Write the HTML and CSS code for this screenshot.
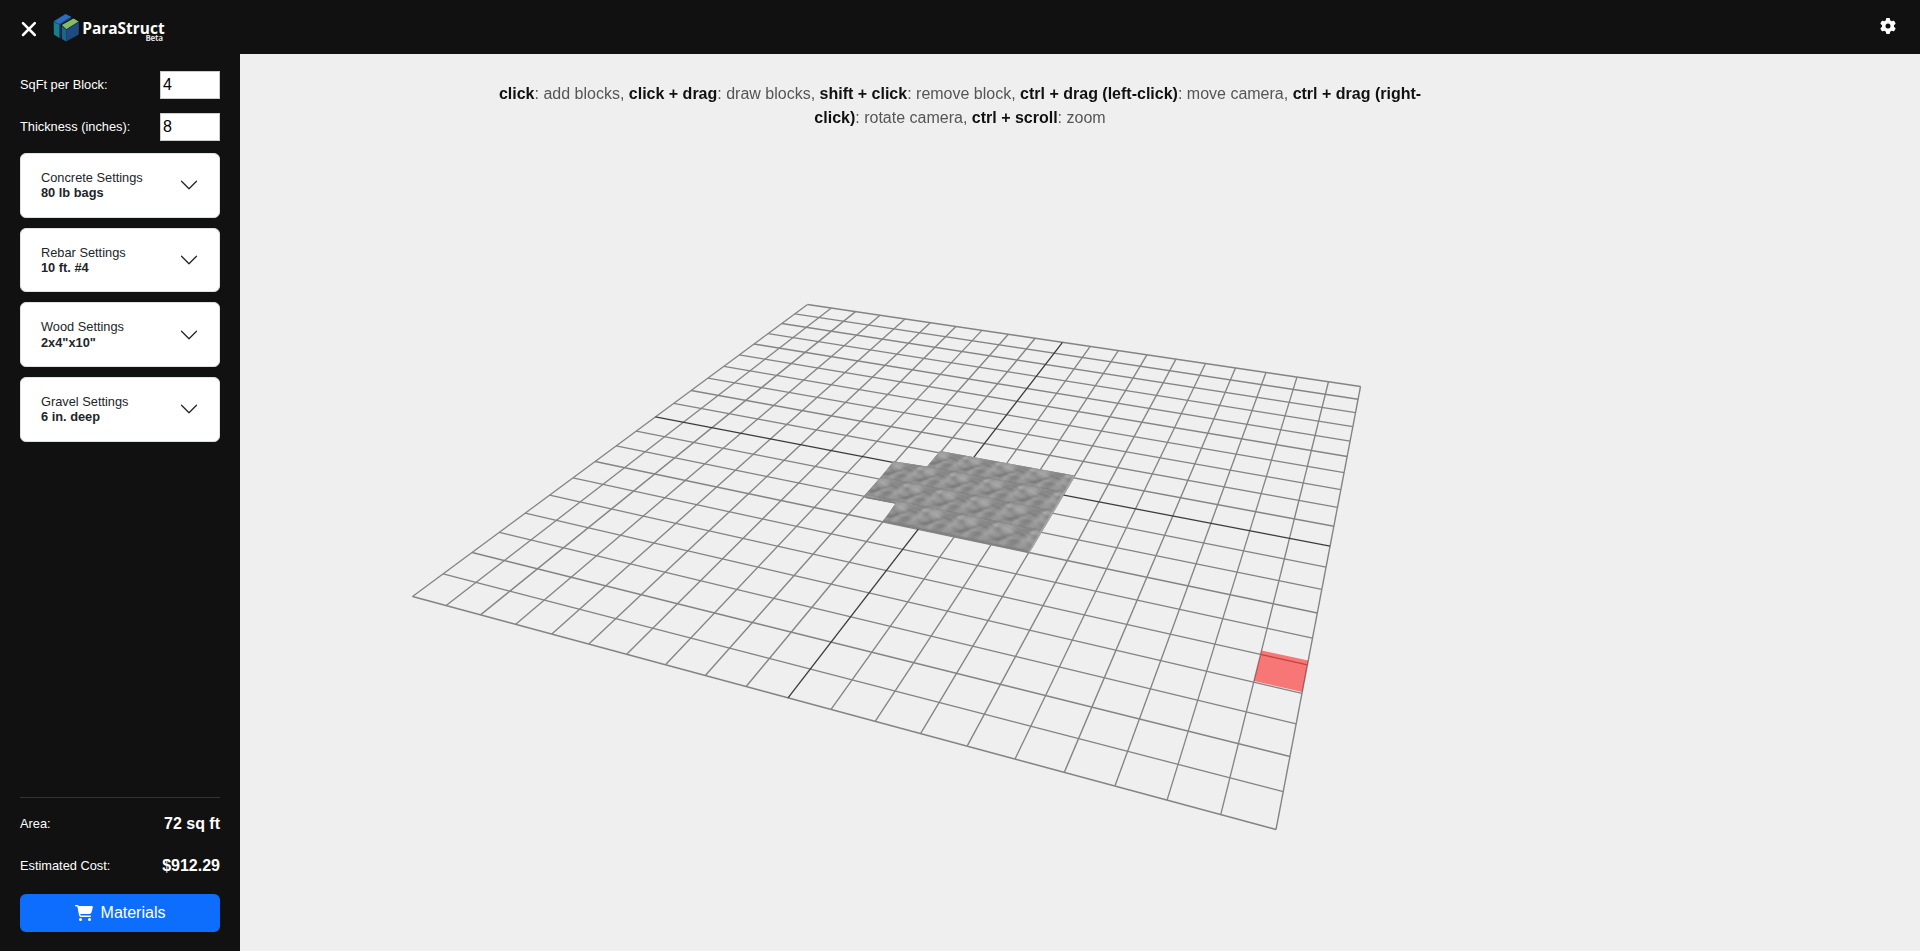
FILE: index.html
```html
<!DOCTYPE html>
<html lang="en">
<head>
<meta charset="utf-8">
<title>ParaStruct</title>
<link rel="stylesheet" href="styles.css">
</head>
<body>
<header class="topbar">
  <div class="brand">
    <svg class="close" viewBox="0 0 18 18"><path d="M3 3.2 14.8 15M14.8 3.2 3 15"/></svg>
    <svg class="logo" viewBox="0 0 92 30">
      <path fill="#2b6cc4" d="M.7 8.200 12.500.900 18.200 3.700 6.200 11.200z"/>
      <path fill="#15808a" d="M.700 8.700 6.200 11.600 6.300 24.900.900 21.500z"/>
      <path fill="#1d4f92" d="M6.200 11.200 18.200 3.700 18.300 6 9.500 11.700 8.500 25.700 6.300 24.800z"/>
      <path fill="#111" d="M7.500 11.400 19.200 4.500 19.500 5.800 8.800 12.500 8.700 25.900 7.500 25.200z"/>
      <path fill="#84bd66" d="M8.900 11.900 20.500 5.400 25.700 8.400 13.300 16.200z"/>
      <path fill="#1b6585" d="M8.800 13 13.200 16.700V28.500L8.900 25.900z"/>
      <path fill="#1d4a80" d="M13.200 16.700 25.800 9V21.600L13.200 28.500z"/>
      <text class="logo-name" x="29.200" y="21" textLength="82.500" lengthAdjust="spacingAndGlyphs">ParaStruct</text>
      <text class="logo-tag" x="92.500" y="27.500" textLength="17.500">Beta</text>
    </svg>
  </div>
  <svg class="gear" viewBox="0 0 512 512"><path d="M495.900 166.600c3.200 8.700 .5 18.400-6.400 24.600l-43.300 39.400c1.100 8.300 1.700 16.800 1.700 25.400s-.6 17.100-1.700 25.400l43.300 39.400c6.900 6.200 9.600 15.900 6.400 24.600c-4.400 11.900-9.700 23.300-15.800 34.300l-4.700 8.100c-6.600 11-14 21.400-22.100 31.200c-5.900 7.200-15.700 9.600-24.500 6.800l-55.700-17.700c-13.400 10.300-28.200 18.900-44 25.400l-12.500 57.100c-2 9.100-9 16.300-18.200 17.800c-13.800 2.300-28 3.500-42.500 3.500s-28.700-1.200-42.500-3.500c-9.200-1.500-16.200-8.700-18.200-17.800l-12.500-57.100c-15.800-6.500-30.600-15.100-44-25.400L83.100 425.900c-8.800 2.800-18.600 .3-24.500-6.800c-8.100-9.800-15.500-20.200-22.100-31.200l-4.700-8.100c-6.100-11-11.400-22.400-15.800-34.300c-3.200-8.700-.5-18.400 6.400-24.600l43.300-39.400C64.600 273.100 64 264.600 64 256s.6-17.100 1.700-25.400L22.400 191.200c-6.900-6.200-9.600-15.900-6.400-24.600c4.400-11.900 9.700-23.300 15.800-34.300l4.700-8.100c6.600-11 14-21.400 22.100-31.200c5.900-7.200 15.700-9.600 24.500-6.800l55.700 17.700c13.400-10.300 28.200-18.900 44-25.400l12.500-57.100c2-9.100 9-16.300 18.200-17.800C227.300 1.200 241.500 0 256 0s28.700 1.200 42.500 3.500c9.200 1.500 16.200 8.700 18.200 17.800l12.500 57.100c15.800 6.500 30.600 15.100 44 25.400l55.700-17.700c8.800-2.800 18.600-.3 24.500 6.800c8.100 9.800 15.500 20.200 22.100 31.200l4.700 8.100c6.100 11 11.400 22.400 15.800 34.300zM256 336a80 80 0 1 0 0-160 80 80 0 1 0 0 160z"/></svg>
</header>
<div class="workspace">
  <aside class="sidebar">
    <label class="field">SqFt per Block:<input class="number" value="4"></label>
    <label class="field">Thickness (inches):<input class="number" value="8"></label>
    <div class="cards">
      <button class="card"><span>Concrete Settings<b>80 lb bags</b></span><svg class="chevron" viewBox="0 0 16 16"><path d="M2 5l6 6 6-6"/></svg></button>
      <button class="card"><span>Rebar Settings<b>10 ft. #4</b></span><svg class="chevron" viewBox="0 0 16 16"><path d="M2 5l6 6 6-6"/></svg></button>
      <button class="card"><span>Wood Settings<b>2x4"x10"</b></span><svg class="chevron" viewBox="0 0 16 16"><path d="M2 5l6 6 6-6"/></svg></button>
      <button class="card"><span>Gravel Settings<b>6 in. deep</b></span><svg class="chevron" viewBox="0 0 16 16"><path d="M2 5l6 6 6-6"/></svg></button>
    </div>
    <div class="summary">
      <div class="total">Area:<b>72 sq ft</b></div>
      <div class="total">Estimated Cost:<b>$912.29</b></div>
      <button class="materials"><svg class="cart" viewBox="0 0 576 512"><path d="M0 24C0 10.700 10.700 0 24 0H69.500c22 0 41.500 12.800 50.600 32h411c26.300 0 45.500 25 38.600 50.400l-41 152.300c-8.500 31.400-37 53.300-69.500 53.300H170.700l5.400 28.500c2.200 11.300 12.100 19.500 23.600 19.500H488c13.300 0 24 10.700 24 24s-10.700 24-24 24H199.700c-34.600 0-64.300-24.600-70.700-58.500L77.400 54.500c-.7-3.800-4-6.500-7.900-6.500H24C10.700 48 0 37.300 0 24zM128 464a48 48 0 1 1 96 0 48 48 0 1 1 -96 0zm336-48a48 48 0 1 1 0 96 48 48 0 1 1 0-96z"/></svg>Materials</button>
    </div>
  </aside>
  <main class="stage">
    <canvas class="scene" id="scene" width="1680" height="897"></canvas>
    <p class="help"><b>click</b>: add blocks, <b>click + drag</b>: draw blocks, <b>shift + click</b>: remove block, <b>ctrl + drag (left-click)</b>: move camera, <b>ctrl + drag (right-click)</b>: rotate camera, <b>ctrl + scroll</b>: zoom</p>
  </main>
</div>
<script src="scene.js"></script>
</body>
</html>
```
FILE: styles.css
```css
* { box-sizing: border-box; }
body {
  margin: 0;
  height: 100vh;
  display: flex;
  flex-direction: column;
  overflow: hidden;
  background: #111;
  color: #fff;
  font: 16px/1.5 "Liberation Sans", Arial, sans-serif;
}
button, input { font: inherit; }
.topbar {
  height: 54px;
  flex: none;
  display: flex;
  justify-content: space-between;
  padding: 0 24px 0 20px;
}
.brand { display: flex; align-items: flex-start; }
.close { width: 18px; height: 18px; margin: 20px 15px 0 0; fill: none; stroke: #fff; stroke-width: 2.5; stroke-linecap: round; }
.logo { width: 92px; height: 30px; margin-top: 13px; overflow: visible; }
.logo-name { font: 700 15.5px "Open Sans", "Noto Sans", sans-serif; fill: #fff; }
.logo-tag { font: 700 8px "Open Sans", "Noto Sans", sans-serif; fill: #ddd; }
.gear { width: 16px; height: 16px; margin-top: 18px; fill: #fff; }
.workspace { flex: 1; display: flex; min-height: 0; }
.sidebar {
  width: 240px;
  flex: none;
  display: flex;
  flex-direction: column;
  padding: 17px 20px 19px;
  font-size: 12.8px;
}
.field { height: 28px; margin-bottom: 14px; display: flex; align-items: center; justify-content: space-between; white-space: nowrap; }
.number { width: 60px; height: 28px; padding: 0 2px; border: 1px solid #ccc; border-radius: 0; background: #fff; color: #000; font-size: 16px; line-height: 24px; }
.cards { display: flex; flex-direction: column; gap: 10px; margin-top: -2px; }
.card {
  display: flex;
  align-items: center;
  justify-content: space-between;
  padding: 16px 20px;
  border: 1px solid #dee2e6;
  border-radius: 6px;
  background: #fff;
  color: #212529;
  line-height: 1.2;
  text-align: left;
}
.card b { display: block; }
.chevron { width: 20px; height: 20px; fill: none; stroke: #212529; stroke-linecap: round; stroke-linejoin: round; }
.summary { margin-top: auto; border-top: 1px solid #333; padding-top: 5px; }
.total { height: 42px; display: flex; align-items: center; justify-content: space-between; }
.total b { font-size: 16px; }
.materials { width: 100%; height: 38px; margin-top: 7px; padding: 0; display: flex; align-items: center; justify-content: center; gap: 8px; border: 0; border-radius: 6px; background: #0d6efd; color: #fff; font-size: 16px; }
.cart { width: 18px; height: 16px; fill: #fff; }
.stage { position: relative; flex: 1; background: #efefef; }
.scene { display: block; }
.help { position: absolute; top: 28px; left: 240px; width: 960px; margin: 0; text-align: center; color: #555; }
.help b { color: #111; }
```
FILE: scene.js
```js
const ctx = document.getElementById('scene').getContext('2d');
ctx.translate(-240, -54);

// Projects a unit square onto a quad given as TL, TR, BR, BL.
function projection(q) {
  const [[x0, y0], [x1, y1], [x2, y2], [x3, y3]] = q;
  const dx1 = x1 - x2, dx2 = x3 - x2, sx = x0 - x1 + x2 - x3;
  const dy1 = y1 - y2, dy2 = y3 - y2, sy = y0 - y1 + y2 - y3;
  const d = dx1 * dy2 - dx2 * dy1;
  const g = (sx * dy2 - dx2 * sy) / d, h = (dx1 * sy - sx * dy1) / d;
  const a = x1 - x0 + g * x1, b = x3 - x0 + h * x3;
  const c = y1 - y0 + g * y1, e = y3 - y0 + h * y3;
  return {
    at(u, v) { const w = g * u + h * v + 1; return [(a * u + b * v + x0) / w, (c * u + e * v + y0) / w]; },
    inverse(x, y) {
      const A = a - g * x, B = b - h * x, C = c - g * y, D = e - h * y;
      const k = A * D - B * C, p = x - x0, r = y - y0;
      return [(p * D - B * r) / k, (A * r - p * C) / k];
    }
  };
}

function path(points) {
  ctx.beginPath();
  points.forEach(p => ctx.lineTo(p[0], p[1]));
}

const grid = projection([[807.5, 304.5], [1360.5, 386.5], [1276, 829.5], [412.5, 596.5]]);
function gridLine(p, q, color) {
  ctx.strokeStyle = color;
  path([grid.at(...p), grid.at(...q)]);
  ctx.stroke();
}
ctx.lineWidth = 1.35;
for (let i = 0; i <= 20; i++) {
  if (i === 10) continue;
  gridLine([i / 20, 0], [i / 20, 1], '#848484');
  gridLine([0, i / 20], [1, i / 20], '#848484');
}
gridLine([0.5, 0], [0.5, 1], '#3c3c3c');
gridLine([0, 0.5], [1, 0.5], '#3c3c3c');

// Concrete texture, repeating once per block.
function hash(x, y, n) {
  x = ((x % n) + n) % n; y = ((y % n) + n) % n;
  const s = Math.sin(x * 127.1 + y * 311.7 + n * 17.3) * 43758.5453;
  return s - Math.floor(s);
}
function noise(x, y, n) {
  x *= n; y *= n;
  const i = Math.floor(x), j = Math.floor(y);
  let s = x - i, t = y - j;
  s = s * s * (3 - 2 * s); t = t * t * (3 - 2 * t);
  return (hash(i, j, n) * (1 - s) + hash(i + 1, j, n) * s) * (1 - t) +
         (hash(i, j + 1, n) * (1 - s) + hash(i + 1, j + 1, n) * s) * t - 0.5;
}

const slab = projection([[940, 451], [1074.5, 475], [1029, 552], [883.5, 520.5]]);
const outline = [[940, 451], [1074.5, 475.5], [1029, 552.7], [883, 521.5], [895.5, 503.5], [864.5, 497.5], [893.5, 461.3], [927, 466.5]];
ctx.save();
path(outline);
ctx.closePath();
ctx.fillStyle = '#8e8e8e';
ctx.fill();
ctx.clip();
for (let y = 450; y < 554; y++) {
  for (let x = 864; x < 1076; x++) {
    const [u, v] = slab.inverse(x + 0.5, y + 0.5);
    let s = u * 4, t = v * 4;
    const f = t - Math.floor(t);
    s += noise(s, t, 3) * 0.18;
    t += noise(s + 0.4, t + 0.7, 3) * 0.18;
    let k = 147 + noise(s + t, t - s, 3) * 30 + noise(s, t + s, 4) * 30 + noise(s - t, t, 6) * 20;
    if (f > 0.93) k -= 7;
    k = Math.round(k);
    ctx.fillStyle = `rgb(${k},${k},${k})`;
    ctx.fillRect(x, y, 1, 1);
  }
}
ctx.restore();
ctx.lineWidth = 1.5;
ctx.strokeStyle = '#808080';
path([[883.5, 521], [1028.500, 552]]);
ctx.stroke();
path([[865, 497.2], [895.5, 503]]);
ctx.stroke();
ctx.strokeStyle = '#a6a6a6';
path([[1074, 476], [1029, 552]]);
ctx.stroke();

// Hovered block
ctx.fillStyle = 'rgba(255,0,0,0.5)';
path([[1261.7, 650.5], [1308.3, 660.5], [1302.3, 692], [1254, 681]]);
ctx.fill();
```
